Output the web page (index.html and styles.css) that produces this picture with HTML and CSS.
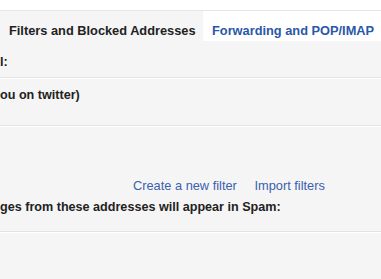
FILE: index.html
```html
<!DOCTYPE html>
<html lang="en">
<head>
    <meta charset="UTF-8">
    <title>Settings - Filters</title>
    <link rel="stylesheet" href="styles.css">
</head>
<body>
    <div class="topbar"></div>

    <div class="tabs">
        <div class="tab active">Filters and Blocked Addresses</div>
        <div class="tab">Forwarding and POP/IMAP</div>
    </div>

    <div class="content">
        <div class="row heading first">l:</div>
        <div class="row filter">ou on twitter)</div>
        <div class="actions">
            <a href="#">Create a new filter</a>
            <a href="#">Import filters</a>
        </div>
        <div class="row heading blocked">ges from these addresses will appear in Spam:</div>
    </div>
</body>
</html>
```

FILE: styles.css
```css
body {
    margin: 0;
    background-color: #fff;
    font-family: Arial, "Liberation Sans", sans-serif;
    font-size: 13px;
    color: #222;
    overflow: hidden;
}
.topbar {
    height: 10px;
    border-bottom: 1px solid #e6e6e6;
}
.tabs {
    display: flex;
    height: 30px;
    background-color: #fff;
    white-space: nowrap;
}
.tab {
    flex-shrink: 0;
    padding: 9px 9px 0;
    line-height: 21px;
    font-size: 12.8px;
    font-weight: bold;
    color: #2a57a8;
}
.tab.active {
    background-color: #f5f5f5;
    color: #222;
    width: 185px;
}
.content {
    background-color: #f5f5f5;
    min-height: 238px;
}
.row {
    font-size: 12.6px;
    font-weight: bold;
    white-space: nowrap;
    border-bottom: 1px solid #e3e3e3;
    box-shadow: 0 1px 0 #fff;
}
.first {
    padding-top: 14px;
    height: 22px;
}
.filter {
    padding-top: 10px;
    height: 37px;
}
.actions {
    padding: 52px 0 0 133px;
    height: 20px;
}
.actions a {
    color: #3b60ae;
    font-size: 12.8px;
    text-decoration: none;
    margin-right: 14px;
}
.blocked {
    padding-top: 2px;
    height: 31px;
}
```
